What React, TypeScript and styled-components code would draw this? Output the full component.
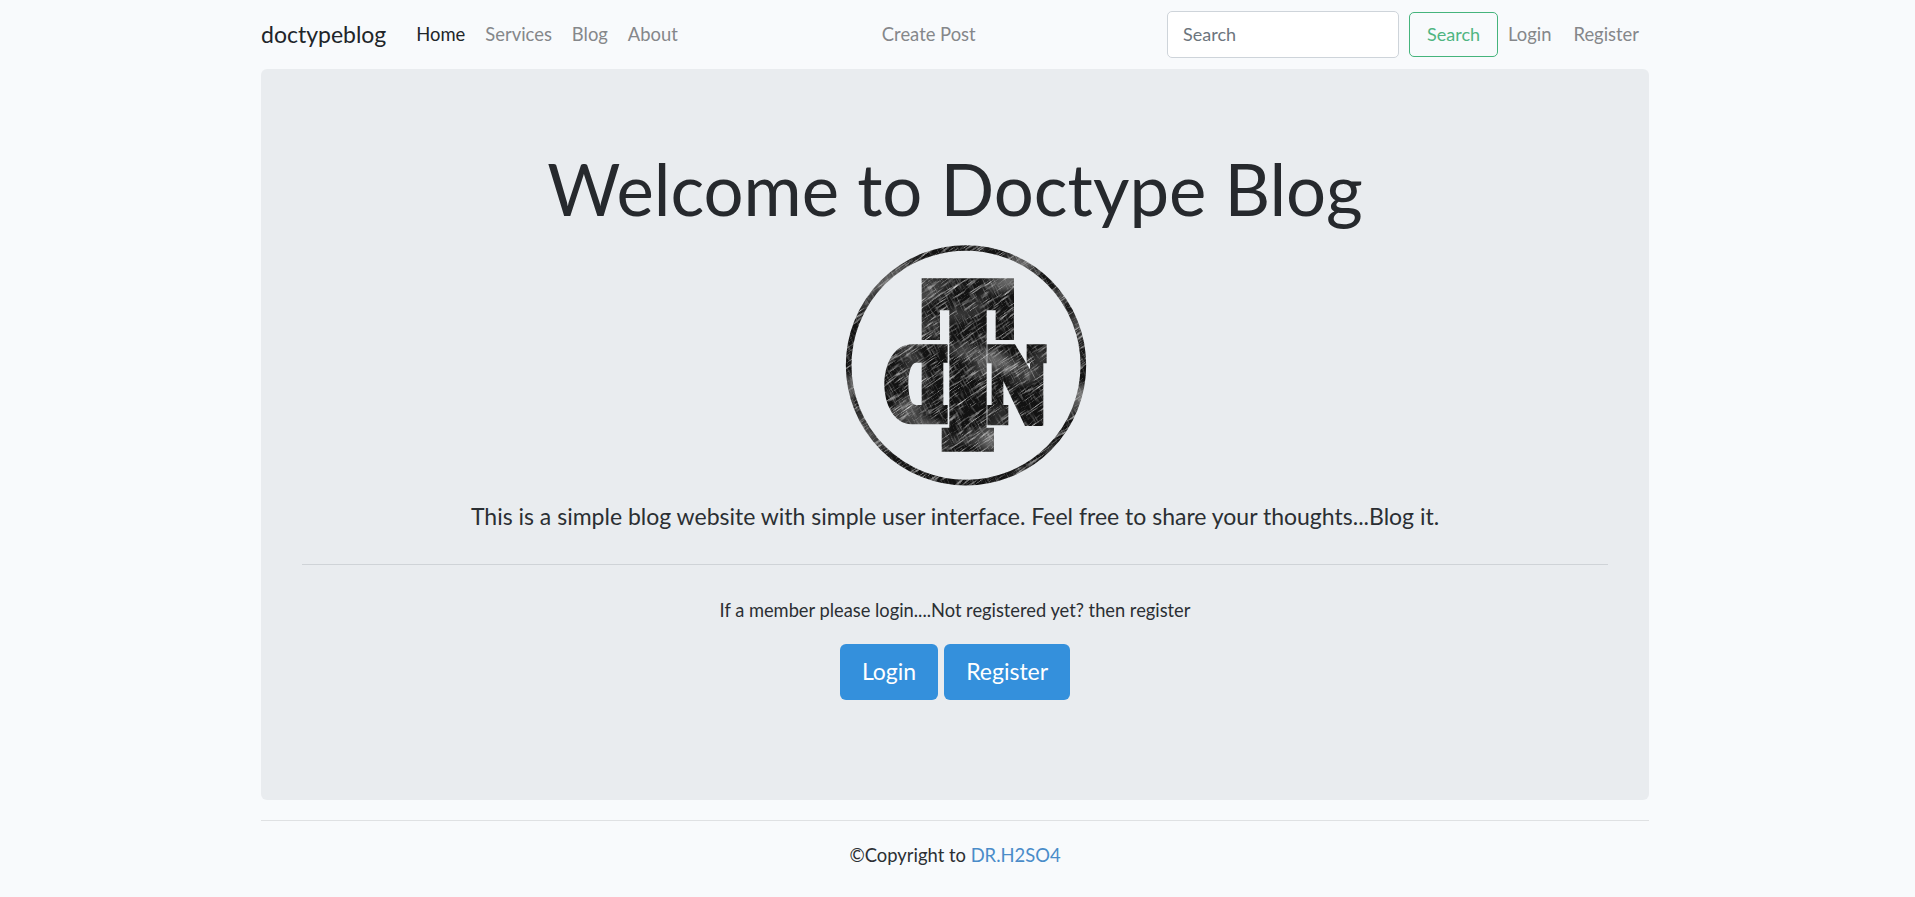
import React from 'react';
import styled, { createGlobalStyle } from 'styled-components';

const GlobalStyle = createGlobalStyle`
  html, body {
    margin: 0;
    padding: 0;
  }
  body {
    background: #f8fafc;
    font-family: "Lato", "Noto Sans", sans-serif;
    color: #2b2f33;
  }
`;

const Page = styled.div`
  width: 1388px;
  margin-left: 261px;
`;

const NavBar = styled.nav`
  height: 69px;
  display: flex;
  align-items: center;
  font-size: 18.4px;
`;

const Brand = styled.a`
  font-size: 23px;
  color: #212529;
  margin-right: 20px;
  position: relative;
  top: -1px;
`;

const NavLink = styled.a<{ $active?: boolean }>`
  padding: 0 10px;
  position: relative;
  top: -1px;
  color: ${({ $active }) => ($active ? '#212529' : '#85878a')};
`;

const LinkGroup = styled.div<{ $gap?: number }>`
  display: flex;
  gap: ${({ $gap }) => $gap ?? 0}px;
`;

const CenterLinks = styled.div`
  display: flex;
  margin-left: 184px;
`;

const SearchForm = styled.form`
  display: flex;
  align-items: center;
  margin-left: auto;
`;

const SearchInput = styled.input`
  box-sizing: border-box;
  width: 232px;
  height: 47px;
  padding: 0 15px 2px;
  border: 1px solid #ced4da;
  border-radius: 5px;
  background: #fff;
  font: inherit;
  font-size: 18px;
  &::placeholder {
    color: #6c757d;
    opacity: 1;
  }
`;

const SearchButton = styled.button`
  box-sizing: border-box;
  width: 89px;
  height: 45px;
  margin-left: 10px;
  padding: 0 0 2px;
  border: 1px solid #45b47c;
  border-radius: 5px;
  background: transparent;
  color: #4fb581;
  font: inherit;
  font-size: 18px;
`;

const Jumbotron = styled.main`
  box-sizing: border-box;
  height: 731px;
  padding: 77px 41px 0;
  border-radius: 6px;
  background: #e9ecef;
  text-align: center;
`;

const Title = styled.h1`
  margin: 0;
  font-size: 70.7px;
  font-weight: 400;
  line-height: 86px;
  color: #26292d;
`;

const LogoMark = styled.svg`
  display: block;
  width: 270px;
  height: 260px;
  margin: -1px auto 0;
`;

const Lead = styled.p`
  margin: 9px 0 0;
  font-size: 23px;
  font-weight: 400;
  line-height: 32px;
`;

const Divider = styled.hr`
  margin: 32px 0 0;
  border: 0;
  border-top: 1px solid #cfd3d7;
`;

const Note = styled.p`
  margin: 32px 0 0;
  font-size: 18.3px;
  line-height: 26px;
`;

const Actions = styled.div`
  display: flex;
  justify-content: center;
  gap: 6px;
  margin-top: 21px;
`;

const ActionButton = styled.a`
  display: flex;
  align-items: center;
  box-sizing: border-box;
  height: 56px;
  padding: 0 22px 2px;
  border-radius: 6px;
  background: #3490dc;
  color: #fff;
  font-size: 23px;
`;

const Footer = styled.footer`
  margin-top: 20px;
  padding-top: 21px;
  border-top: 1px solid #dfe1e3;
  font-size: 18.4px;
  line-height: 26px;
  text-align: center;
`;

const FooterLink = styled.a`
  color: #4a8cc9;
`;

const Logo = () => (
  <LogoMark viewBox="0 0 810 780" aria-label="DTN logo">
    <defs>
      <filter id="scratchFine" x="0" y="0" width="100%" height="100%">
        <feTurbulence type="fractalNoise" baseFrequency="0.018 0.5" numOctaves="3" seed="7" />
        <feColorMatrix values="0 0 0 0 0.62  0 0 0 0 0.62  0 0 0 0 0.62  2.8 0 0 0 -1.4" />
      </filter>
      <filter id="scratchCross" x="0" y="0" width="100%" height="100%">
        <feTurbulence type="fractalNoise" baseFrequency="0.03 0.55" numOctaves="2" seed="23" />
        <feColorMatrix values="0 0 0 0 0.5  0 0 0 0 0.5  0 0 0 0 0.5  2.6 0 0 0 -1.3" />
      </filter>
      <filter id="cloud" x="0" y="0" width="100%" height="100%">
        <feTurbulence type="fractalNoise" baseFrequency="0.006 0.009" numOctaves="2" seed="11" />
        <feColorMatrix values="0 0 0 0 0.45  0 0 0 0 0.45  0 0 0 0 0.45  1.8 0 0 0 -0.85" />
      </filter>
      <mask id="monogram">
        <g fill="#fff">
          <circle cx="438" cy="403" r="352" fill="none" stroke="#fff" strokeWidth="17" />
          <polygon points="305,142 582,142 582,327 527,327 527,238 500,238 500,590 522,590 522,662 365,662 365,590 388,590 388,238 360,238 360,327 305,327" />
          <path
            d="M383 340 V395 H370 V522 H383 V580 H275 C222 580 193 520 193 460 C193 400 222 340 275 340 Z M305 395 H288 C272 395 265 430 265 458 C265 490 272 522 288 522 H305 Z"
            fillRule="evenodd"
          />
          <polygon points="502,340 585,340 630,415 630,397 620,397 620,340 680,340 680,397 670,397 670,585 615,585 550,450 550,522 565,522 565,583 502,583 502,522 515,522 515,397 502,397" />
        </g>
      </mask>
    </defs>
    <g mask="url(#monogram)">
      <rect width="810" height="780" fill="#121212" />
      <rect width="810" height="780" filter="url(#cloud)" />
      <g transform="rotate(-35 405 390)">
        <rect x="-200" y="-200" width="1210" height="1180" filter="url(#scratchFine)" />
      </g>
      <g transform="rotate(62 405 390)" opacity="0.5">
        <rect x="-200" y="-200" width="1210" height="1180" filter="url(#scratchCross)" />
      </g>
    </g>
  </LogoMark>
);

export default function App() {
  return (
    <Page>
      <GlobalStyle />
      <NavBar>
        <Brand>doctypeblog</Brand>
        <LinkGroup>
          <NavLink $active>Home</NavLink>
          <NavLink>Services</NavLink>
          <NavLink>Blog</NavLink>
          <NavLink>About</NavLink>
        </LinkGroup>
        <CenterLinks>
          <NavLink>Create Post</NavLink>
        </CenterLinks>
        <SearchForm>
          <SearchInput placeholder="Search" />
          <SearchButton type="button">Search</SearchButton>
        </SearchForm>
        <LinkGroup $gap={2}>
          <NavLink>Login</NavLink>
          <NavLink>Register</NavLink>
        </LinkGroup>
      </NavBar>
      <Jumbotron>
        <Title>Welcome to Doctype Blog</Title>
        <Logo />
        <Lead>This is a simple blog website with simple user interface. Feel free to share your thoughts...Blog it.</Lead>
        <Divider />
        <Note>If a member please login....Not registered yet? then register</Note>
        <Actions>
          <ActionButton>Login</ActionButton>
          <ActionButton>Register</ActionButton>
        </Actions>
      </Jumbotron>
      <Footer>
        ©Copyright to <FooterLink>DR.H2SO4</FooterLink>
      </Footer>
    </Page>
  );
}
